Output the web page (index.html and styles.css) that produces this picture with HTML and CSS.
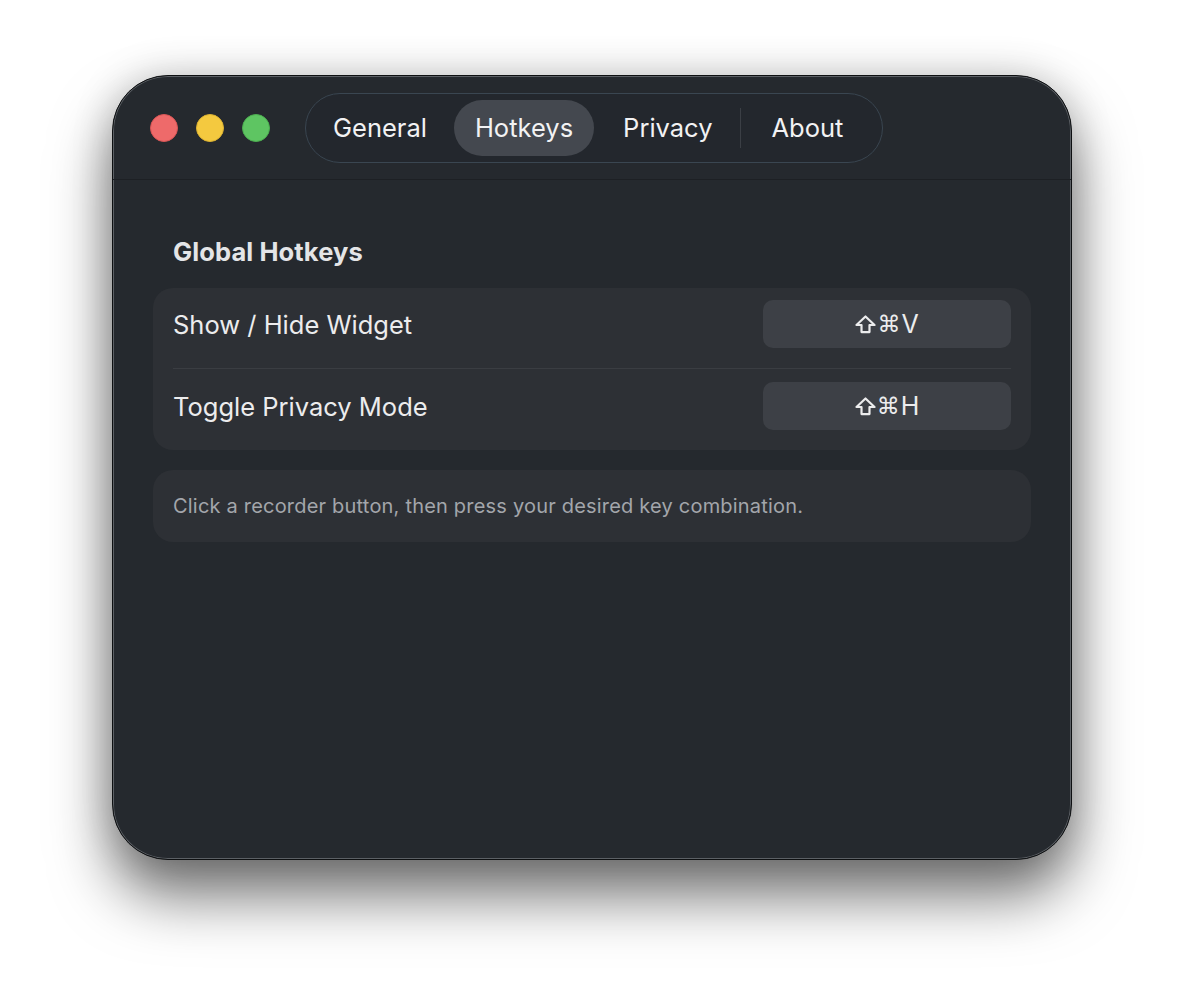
FILE: index.html
```html
<!DOCTYPE html>
<html lang="en">
<head>
    <meta charset="UTF-8">
    <meta name="viewport" content="width=device-width, initial-scale=1.0">
    <title>Settings — Hotkeys</title>
    <link rel="stylesheet" href="styles.css">
</head>
<body>
    <div class="window">
        <div class="titlebar">
            <div class="lights">
                <span class="light red"></span>
                <span class="light yellow"></span>
                <span class="light green"></span>
            </div>
            <nav class="tabs">
                <button class="tab">General</button>
                <button class="tab active">Hotkeys</button>
                <button class="tab privacy">Privacy</button>
                <span class="tab-sep"></span>
                <button class="tab">About</button>
            </nav>
        </div>

        <div class="content">
            <h3 class="section-title">Global Hotkeys</h3>
            <div class="card">
                <div class="row">
                    <span class="row-label">Show / Hide Widget</span>
                    <button class="recorder">
                        <svg class="shift" viewBox="0 0 22 20" width="21" height="19">
                            <path d="M11 1.5 L20.5 10.5 H15.2 V18 H6.8 V10.5 H1.5 Z" />
                        </svg><span class="cmd">⌘</span>V
                    </button>
                </div>
                <div class="row">
                    <span class="row-label">Toggle Privacy Mode</span>
                    <button class="recorder">
                        <svg class="shift" viewBox="0 0 22 20" width="21" height="19">
                            <path d="M11 1.5 L20.5 10.5 H15.2 V18 H6.8 V10.5 H1.5 Z" />
                        </svg><span class="cmd">⌘</span>H
                    </button>
                </div>
            </div>
            <div class="card hint">
                Click a recorder button, then press your desired key combination.
            </div>
        </div>
    </div>
</body>
</html>
```

FILE: styles.css
```css
* {
    padding: 0;
    margin: 0;
    box-sizing: border-box;
}
html, body {
    height: 100%;
}
body {
    background: #ffffff;
    font-family: Inter, "Noto Sans", sans-serif;
    color: #ececed;
    padding: 75px 0 0 112px;
    overflow: hidden;
}
.window {
    width: 960px;
    height: 785px;
    background: #25292e;
    border-radius: 56px;
    border: 1px solid #0e1012;
    box-shadow: inset 0 0 0 1px #5c6065,
        0 36px 60px rgba(0, 0, 0, 0.55),
        0 0 40px rgba(0, 0, 0, 0.18);
    overflow: hidden;
}
.titlebar {
    height: 104px;
    display: flex;
    align-items: center;
    padding-left: 37px;
    border-bottom: 1px solid #1d2024;
}
.lights {
    display: flex;
    gap: 18px;
}
.light {
    width: 28px;
    height: 28px;
    border-radius: 50%;
}
.red { background: #ee6a6a; border: 1px solid #d95555; }
.yellow { background: #f4c93f; border: 1px solid #dcb232; }
.green { background: #5ec562; border: 1px solid #4cae50; }
.tabs {
    margin-left: 35px;
    height: 70px;
    display: flex;
    align-items: center;
    gap: 6px;
    padding: 0 18px 0 6px;
    border: 1.5px solid #3a4651;
    border-radius: 35px;
    background: #23272d;
}
.tab {
    height: 56px;
    padding: 0 21px;
    border: none;
    border-radius: 28px;
    background: transparent;
    color: #f2f2f3;
    font-family: Inter, "Noto Sans", sans-serif;
    font-size: 25.5px;
    cursor: pointer;
}
.tab.active {
    background: #44484f;
}
.tab.privacy {
    margin-left: 2px;
}
.tab-sep {
    width: 1px;
    height: 40px;
    background: #3b3f45;
    margin: 0 3px 0 1px;
}
.content {
    padding: 56px 40px 0;
}
.section-title {
    font-size: 25.5px;
    font-weight: 700;
    letter-spacing: 0.1px;
    color: #e4e5e7;
    padding-left: 20px;
    margin-bottom: 21px;
}
.card {
    background: #2d3035;
    border-radius: 20px;
    padding: 0 20px;
}
.row {
    display: flex;
    align-items: center;
    justify-content: space-between;
    padding: 12px 0 20px;
}
.row + .row {
    border-top: 1px solid #3a3d42;
    padding-top: 13px;
}
.row-label {
    font-size: 25.5px;
}
.recorder {
    width: 248px;
    height: 48px;
    border: none;
    border-radius: 10px;
    background: #3d4046;
    color: #ececed;
    font-family: Inter, "Noto Sans", sans-serif;
    font-size: 25px;
    display: flex;
    align-items: center;
    justify-content: center;
}
.shift {
    fill: none;
    stroke: #ececed;
    stroke-width: 2.3;
    stroke-linejoin: round;
    margin-right: 1px;
}
.cmd {
    font-family: "DejaVu Sans", sans-serif;
    font-size: 23px;
    margin-right: 1px;
}
.hint {
    margin-top: 20px;
    height: 72px;
    display: flex;
    align-items: center;
    font-size: 20px;
    letter-spacing: 0.2px;
    color: #a3a6ab;
}
```
